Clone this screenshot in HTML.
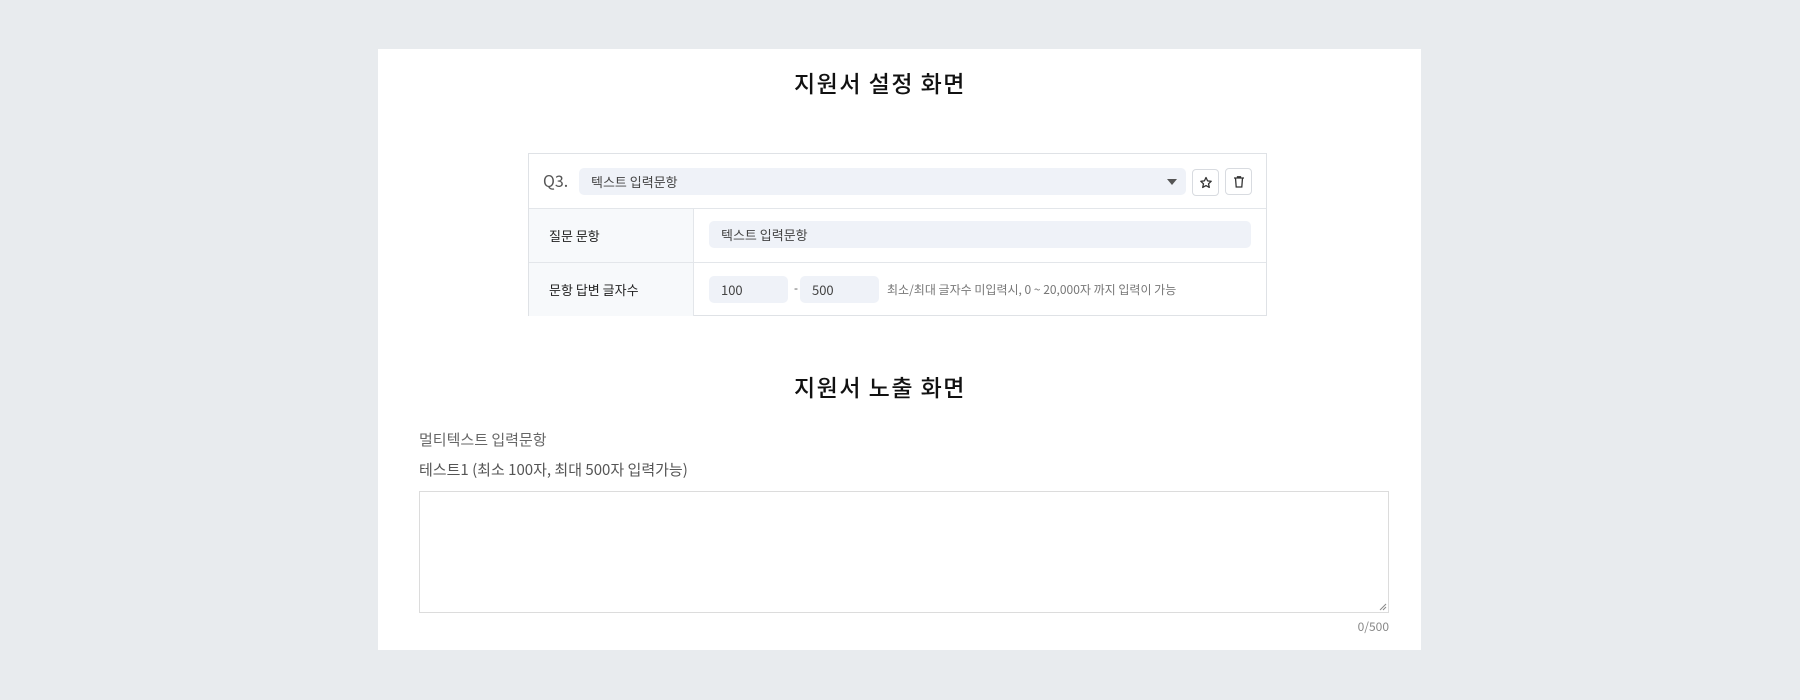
<!DOCTYPE html>
<html><head><meta charset="utf-8"><style>
*{box-sizing:border-box;margin:0;padding:0}
body{width:1800px;height:700px;background:#e8ebee;font-family:"Liberation Sans","Noto Sans CJK KR",sans-serif;position:relative;overflow:hidden}
.panel{position:absolute;left:378px;top:49px;width:1043px;height:601px;background:#fff}
.a{position:absolute}
h2{position:absolute;left:0;width:1760px;text-align:center;font-size:23px;font-weight:500;letter-spacing:1.5px;color:#111;font-family:"Noto Sans CJK KR",sans-serif}
.tbl{position:absolute;left:528px;top:153px;width:739px;height:163px;border:1px solid #dfe2e6}
.row{position:absolute;left:0;width:737px;border-top:1px solid #e3e6ea}
.lab{position:absolute;left:0;top:0;bottom:0;width:165px;background:#f7f9fb;border-right:1px solid #e3e6ea;font-size:13px;color:#222;padding-left:20px;display:flex;align-items:center;font-family:"Noto Sans CJK KR",sans-serif}
.inp{position:absolute;background:#eff2f8;border-radius:5px;font-size:13px;color:#444;display:flex;align-items:center;padding-left:12px;font-family:"Noto Sans CJK KR",sans-serif}
.btn{position:absolute;width:27px;height:27px;border:1px solid #d8dbe0;border-radius:4px;background:#fff;display:flex;align-items:center;justify-content:center}
.k{font-family:"Noto Sans CJK KR",sans-serif}
</style></head><body>
<div class="panel"></div>
<h2 style="top:65px">지원서 설정 화면</h2>
<div class="tbl">
  <div class="a k" style="left:14px;top:14px;font-size:16px;color:#555">Q3.</div>
  <div class="inp" style="left:50px;top:14px;width:607px;height:27px">텍스트 입력문항</div>
  <div class="a" style="left:638px;top:25px;width:0;height:0;border-left:5px solid transparent;border-right:5px solid transparent;border-top:6px solid #555"></div>
  <div class="btn" style="left:663px;top:15px"><svg width="14" height="14" viewBox="0 0 14 14"><path d="M7 1.5l1.6 3.4 3.6.4-2.7 2.5.8 3.6L7 9.6l-3.3 1.8.8-3.6L1.8 5.3l3.6-.4z" fill="none" stroke="#333" stroke-width="1.3" stroke-linejoin="round"/></svg></div>
  <div class="btn" style="left:696px;top:14px"><svg width="14" height="14" viewBox="0 0 14 14"><path d="M2 3h10M5.5 3V1.8h3V3M3.5 3l.7 9h5.6l.7-9" fill="none" stroke="#333" stroke-width="1.3"/></svg></div>
  <div class="row" style="top:54px;height:54px"><div class="lab">질문 문항</div>
    <div class="inp" style="left:180px;top:12px;width:542px;height:27px">텍스트 입력문항</div></div>
  <div class="row" style="top:108px;height:54px"><div class="lab">문항 답변 글자수</div>
    <div class="inp" style="left:180px;top:13px;width:79px;height:27px">100</div>
    <div class="a" style="left:265px;top:18px;font-size:12px;color:#666">-</div>
    <div class="inp" style="left:271px;top:13px;width:79px;height:27px">500</div>
    <div class="a k" style="left:358px;top:18px;font-size:12px;color:#777">최소/최대 글자수 미입력시, 0 ~ 20,000자 까지 입력이 가능</div></div>
</div>
<h2 style="top:369px">지원서 노출 화면</h2>
<div class="a k" style="left:419px;top:429px;font-size:15px;color:#666">멀티텍스트 입력문항</div>
<div class="a k" style="left:419px;top:459px;font-size:15px;color:#555">테스트1 (최소 100자, 최대 500자 입력가능)</div>
<div class="a" style="left:419px;top:491px;width:970px;height:122px;border:1px solid #dcdcdc"></div>
<svg class="a" style="left:1379px;top:603px" width="8" height="8"><path d="M1 7L7 1M4 7L7 4" stroke="#888" stroke-width="1"/></svg>
<div class="a k" style="left:1339px;top:618px;width:50px;text-align:right;font-size:12px;color:#888">0/500</div>
</body></html>
